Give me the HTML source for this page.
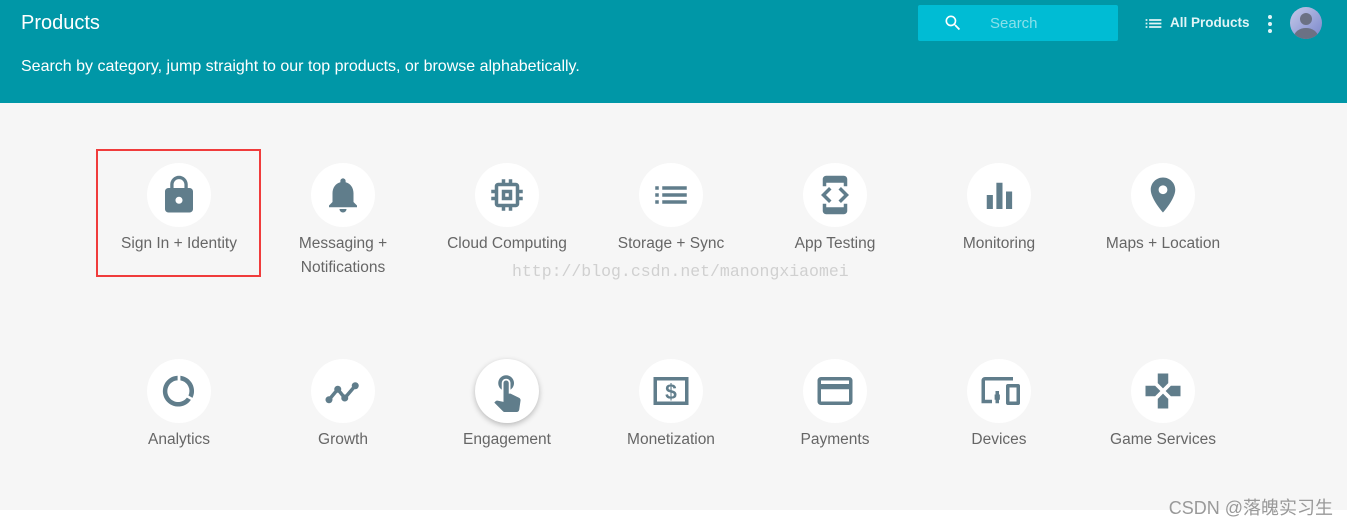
<!DOCTYPE html>
<html><head><meta charset="utf-8"><style>
*{margin:0;padding:0;box-sizing:border-box}
body{width:1347px;height:524px;background:#fff;font-family:"Liberation Sans","Noto Sans CJK SC",sans-serif;position:relative;overflow:hidden}
.hdr{position:absolute;left:0;top:0;width:1347px;height:103px;background:#0097a7;color:#fff}
.title{position:absolute;left:21px;top:12px;font-size:20px}
.sub{position:absolute;left:21px;top:58px;font-size:16px}
.search{position:absolute;left:918px;top:5px;width:200px;height:36px;background:#00bcd4;border-radius:2px}
.search span{position:absolute;left:72px;top:10px;font-size:15px;color:#8ae0ea}
.allp{position:absolute;left:1170px;top:15px;font-size:13.5px;font-weight:bold;color:#e0f4f6}
.main{position:absolute;left:0;top:103px;width:1347px;height:407px;background:#f6f6f6}
.it{position:absolute;width:164px;text-align:center;font-size:15.5px;color:#666;line-height:24px}
.c{width:64px;height:64px;border-radius:50%;background:#fff;margin:0 auto 5px;display:flex;align-items:center;justify-content:center}
.c svg{width:42px;height:42px;fill:#607d8b}
.box{position:absolute;left:96px;top:149px;width:165px;height:128px;border:2px solid #f03c3c}
.wm{position:absolute;left:512px;top:262px;font-family:"Liberation Mono",monospace;font-size:16.5px;color:#d0d0d0}
.csdn{position:absolute;right:14px;top:494px;font-size:18px;color:#999}
</style></head><body>
<div class="hdr">
<div class="title">Products</div>
<div class="sub">Search by category, jump straight to our top products, or browse alphabetically.</div>
<div class="search"><svg style="position:absolute;left:25px;top:8px" width="20" height="20" viewBox="0 0 24 24" fill="#fff"><path d="M15.5 14h-.79l-.28-.27A6.47 6.47 0 0 0 16 9.5 6.5 6.5 0 1 0 9.5 16c1.61 0 3.09-.59 4.230-1.57l.27.28v.79l5 4.99L20.49 19l-4.99-5zm-6 0C7.01 14 5 11.99 5 9.5S7.01 5 9.5 5 14 7.01 14 9.5 11.99 14 9.5 14z"/></svg><span>Search</span></div>
<svg style="position:absolute;left:1143px;top:13px" width="21" height="21" viewBox="0 0 24 24" fill="#e0f4f6"><path d="M3 13h2v-2H3v2zm0 4h2v-2H3v2zm0-8h2V7H3v2zm4 4h14v-2H7v2zm0 4h14v-2H7v2zM7 7v2h14V7H7z"/></svg>
<div class="allp">All Products</div>
<svg style="position:absolute;left:1266px;top:14px" width="8" height="20" viewBox="0 0 8 20" fill="#e0f4f6"><circle cx="4" cy="3" r="2"/><circle cx="4" cy="10" r="2"/><circle cx="4" cy="17" r="2"/></svg>
<svg style="position:absolute;left:1290px;top:7px" width="32" height="32" viewBox="0 0 32 32"><defs><linearGradient id="g" x1="0" y1="0" x2="1" y2="1"><stop offset="0" stop-color="#c5cae9"/><stop offset="1" stop-color="#7986cb"/></linearGradient><clipPath id="cp"><circle cx="16" cy="16" r="16"/></clipPath></defs><circle cx="16" cy="16" r="16" fill="url(#g)"/><g clip-path="url(#cp)" fill="#6b7184"><circle cx="16" cy="12" r="6"/><ellipse cx="16" cy="30" rx="12" ry="9"/></g></svg>
</div>
<div class="main"></div>
<div class="wm">http://blog.csdn.net/manongxiaomei</div>

<div class="it" style="left:97px;top:163px"><div class="c"><svg viewBox="0 0 24 24"><path d="M18 8h-1V6c0-2.76-2.24-5-5-5S7 3.24 7 6v2H6c-1.1 0-2 .9-2 2v10c0 1.1.9 2 2 2h12c1.1 0 2-.9 2-2V10c0-1.1-.9-2-2-2zm-6 9c-1.1 0-2-.9-2-2s.9-2 2-2 2 .9 2 2-.9 2-2 2zm3.1-9H8.9V6c0-1.71 1.39-3.1 3.1-3.1 1.71 0 3.1 1.39 3.1 3.1v2z"/></svg></div>Sign In + Identity</div>
<div class="it" style="left:261px;top:163px"><div class="c"><svg viewBox="0 0 24 24"><path d="M12 22c1.1 0 2-.9 2-2h-4c0 1.1.89 2 2 2zm6-6v-5c0-3.07-1.64-5.64-4.5-6.32V4c0-.83-.67-1.5-1.5-1.5s-1.5.67-1.5 1.5v.68C7.63 5.36 6 7.92 6 11v5l-2 2v1h16v-1l-2-2z"/></svg></div>Messaging +<br>Notifications</div>
<div class="it" style="left:425px;top:163px"><div class="c"><svg viewBox="0 0 24 24"><path d="M15 9H9v6h6V9zm-2 4h-2v-2h2v2zm8-2V9h-2V7c0-1.1-.9-2-2-2h-2V3h-2v2h-2V3H9v2H7c-1.1 0-2 .9-2 2v2H3v2h2v2H3v2h2v2c0 1.1.9 2 2 2h2v2h2v-2h2v2h2v-2h2c1.1 0 2-.9 2-2v-2h2v-2h-2v-2h2zm-4 6H7V7h10v10z"/></svg></div>Cloud Computing</div>
<div class="it" style="left:589px;top:163px"><div class="c"><svg viewBox="0 0 24 24"><path d="M3 13h2v-2H3v2zm0 4h2v-2H3v2zm0-8h2V7H3v2zm4 4h14v-2H7v2zm0 4h14v-2H7v2zM7 7v2h14V7H7z"/></svg></div>Storage + Sync</div>
<div class="it" style="left:753px;top:163px"><div class="c"><svg viewBox="0 0 24 24"><path d="M7 5h10v2h2V3c0-1.1-.9-1.99-2-1.99L7 1c-1.1 0-2 .9-2 2v4h2V5zm8.41 11.59L20 12l-4.59-4.59L14 8.83 17.17 12 14 15.17l1.41 1.42zM10 15.17L6.83 12 10 8.830 8.59 7.41 4 12l4.59 4.59L10 15.17zM17 19H7v-2H5v4c0 1.1.9 2 2 2h10c1.1 0 2-.9 2-2v-4h-2v2z"/></svg></div>App Testing</div>
<div class="it" style="left:917px;top:163px"><div class="c"><svg viewBox="0 0 24 24"><path d="M5 12h3.5v8H5zM10.5 5h3.5v15h-3.5zM16 10h3.5v10H16z"/></svg></div>Monitoring</div>
<div class="it" style="left:1081px;top:163px"><div class="c"><svg viewBox="0 0 24 24"><path d="M12 2C8.13 2 5 5.13 5 9c0 5.25 7 13 7 13s7-7.75 7-13c0-3.87-3.13-7-7-7zm0 9.5c-1.38 0-2.5-1.12-2.5-2.5s1.12-2.5 2.5-2.5 2.5 1.12 2.5 2.5-1.12 2.5-2.5 2.5z"/></svg></div>Maps + Location</div>

<div class="it" style="left:97px;top:359px"><div class="c"><svg viewBox="0 0 24 24"><path d="M12.8 3.3v2.6a6.2 6.2 0 0 1 4.6 8.7l2.3 1.3A8.8 8.8 0 0 0 12.8 3.3zM11.2 3.3a8.8 8.8 0 1 0 7.6 13.8l-2.3-1.3a6.2 6.2 0 1 1-5.3-9.9z"/></svg></div>Analytics</div>
<div class="it" style="left:261px;top:359px"><div class="c"><svg viewBox="0 0 24 24"><path d="M4 17l5-6 4 5 6-7" fill="none" stroke="#607d8b" stroke-width="2"/><circle cx="4" cy="17" r="2"/><circle cx="9" cy="11" r="2"/><circle cx="13" cy="16" r="2"/><circle cx="19" cy="9" r="2"/></svg></div>Growth</div>
<div class="it" style="left:425px;top:359px"><div class="c" style="box-shadow:0 2px 6px rgba(0,0,0,.25)"><svg viewBox="0 0 24 24"><path d="M9 11.24V7.5C9 6.12 10.12 5 11.5 5S14 6.12 14 7.5v3.74c1.21-.81 2-2.18 2-3.74C16 5.01 13.99 3 11.5 3S7 5.01 7 7.5c0 1.56.79 2.93 2 3.74zm9.84 4.63l-4.54-2.26c-.17-.07-.35-.11-.54-.11H13v-6c0-.83-.67-1.5-1.5-1.5S10 6.67 10 7.5v10.74l-3.43-.72c-.08-.01-.15-.03-.24-.03-.31 0-.59.13-.79.33l-.79.8 4.94 4.94c.27.27.65.44 1.06.44h6.79c.75 0 1.33-.55 1.44-1.28l.75-5.27c.01-.07.02-.14.02-.2 0-.62-.38-1.16-.91-1.38z"/></svg></div>Engagement</div>
<div class="it" style="left:589px;top:359px"><div class="c"><svg viewBox="0 0 24 24"><path d="M2 4h20v16H2zM4 6v12h16V6z" fill-rule="evenodd"/><text x="12" y="16.5" text-anchor="middle" font-size="12" font-weight="bold" fill="#607d8b" font-family="Liberation Sans">$</text></svg></div>Monetization</div>
<div class="it" style="left:753px;top:359px"><div class="c"><svg viewBox="0 0 24 24"><path d="M20 4H4c-1.11 0-1.99.89-1.99 2L2 18c0 1.11.89 2 2 2h16c1.11 0 2-.89 2-2V6c0-1.11-.89-2-2-2zm0 14H4v-7h16v7zm0-10H4V6h16v2z"/></svg></div>Payments</div>
<div class="it" style="left:917px;top:359px"><div class="c"><svg viewBox="0 0 24 24"><path d="M4 6h16V4H4c-1.1 0-2 .9-2 2v13h6v-2H4V6zm19 2h-6c-.55 0-1 .45-1 1v10c0 .55.45 1 1 1h6c.55 0 1-.45 1-1V9c0-.55-.45-1-1-1zm-1 10h-4v-8h4v8zM11 12h-1v2h-.5v3h.5v2h2v-2h.5v-3H12v-2z"/></svg></div>Devices</div>
<div class="it" style="left:1081px;top:359px"><div class="c"><svg viewBox="0 0 24 24"><path d="M15 7.5V2H9v5.5l3 3 3-3zM7.5 9H2v6h5.5l3-3-3-3zM9 16.5V22h6v-5.5l-3-3-3 3zM16.5 9l-3 3 3 3H22V9h-5.5z"/></svg></div>Game Services</div>

<div class="box"></div>
<div class="csdn">CSDN @落魄实习生</div>
</body></html>
